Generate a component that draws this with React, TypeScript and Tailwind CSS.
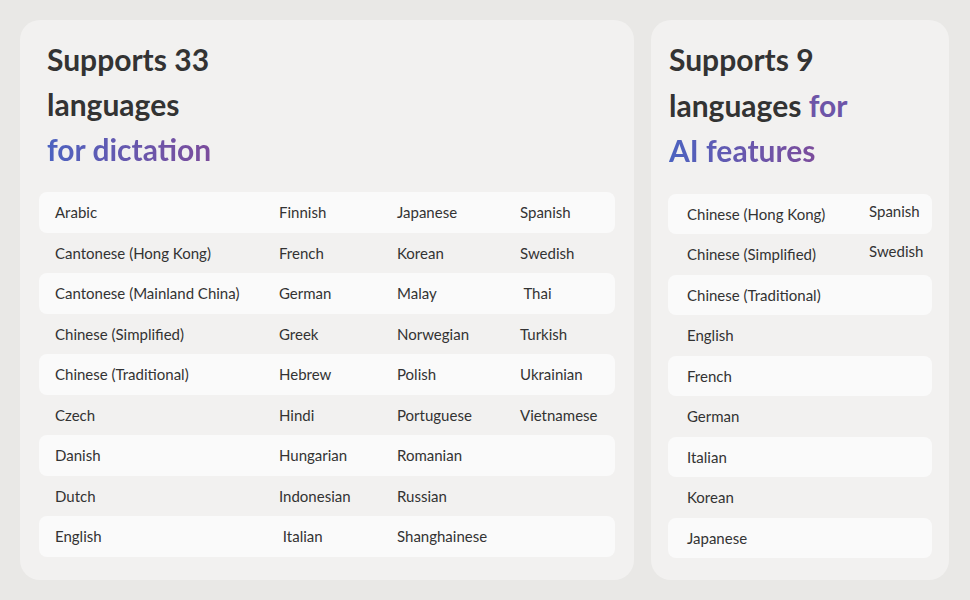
const left: string[][] = [
  ["Arabic", "Finnish", "Japanese", "Spanish"],
  ["Cantonese (Hong Kong)", "French", "Korean", "Swedish"],
  ["Cantonese (Mainland China)", "German", "Malay", "\u00a0Thai"],
  ["Chinese (Simplified)", "Greek", "Norwegian", "Turkish"],
  ["Chinese (Traditional)", "Hebrew", "Polish", "Ukrainian"],
  ["Czech", "Hindi", "Portuguese", "Vietnamese"],
  ["Danish", "Hungarian", "Romanian", ""],
  ["Dutch", "Indonesian", "Russian", ""],
  ["English", "\u00a0Italian", "Shanghainese", ""],
];

const right: string[][] = [
  ["Chinese (Hong Kong)", "Spanish"],
  ["Chinese (Simplified)", "Swedish"],
  ["Chinese (Traditional)", ""],
  ["English", ""],
  ["French", ""],
  ["German", ""],
  ["Italian", ""],
  ["Korean", ""],
  ["Japanese", ""],
];

const grad = "bg-gradient-to-r from-[#4b62c0] to-[#7b4c9c] bg-clip-text text-transparent";

export default function App() {
  return (
    <div className="w-[970px] h-[600px] bg-[#e9e8e6] flex gap-[17px] p-[20px] font-[Lato,sans-serif] text-[#333]">
      <div className="w-[614px] h-[560px] bg-[#f2f1f0] rounded-[20px] pt-[17px] px-[19px]">
        <h1 className="pl-[8px] text-[30px] font-bold leading-[45px] text-[#333]">
          Supports 33
          <br />
          languages
          <br />
          <span className={grad}>for dictation</span>
        </h1>
        <div className="mt-[20px]">
          {left.map((r, i) => (
            <div
              key={i}
              className={`flex items-center h-[40.5px] px-[16px] text-[15px] rounded-[8px] ${i % 2 === 0 ? "bg-[#fafafa]" : ""}`}
            >
              <span className="w-[224px] shrink-0">{r[0]}</span>
              <span className="w-[118px] shrink-0">{r[1]}</span>
              <span className="w-[123px] shrink-0">{r[2]}</span>
              <span>{r[3]}</span>
            </div>
          ))}
        </div>
      </div>
      <div className="w-[298px] h-[560px] bg-[#f2f1f0] rounded-[20px] pt-[17px] px-[17px]">
        <h1 className="pl-[1px] text-[30px] font-bold leading-[45.5px] text-[#333]">
          Supports 9
          <br />
          languages <span className="text-[#6d55a8]">for</span>
          <br />
          <span className={grad}>AI features</span>
        </h1>
        <div className="mt-[20px]">
          {right.map((r, i) => (
            <div
              key={i}
              className={`flex items-center h-[40.5px] px-[19px] text-[15px] rounded-[8px] ${i % 2 === 0 ? "bg-[#fafafa]" : ""}`}
            >
              <span className="w-[182px] shrink-0">{r[0]}</span>
              <span className="-mt-[6px]">{r[1]}</span>
            </div>
          ))}
        </div>
      </div>
    </div>
  );
}
